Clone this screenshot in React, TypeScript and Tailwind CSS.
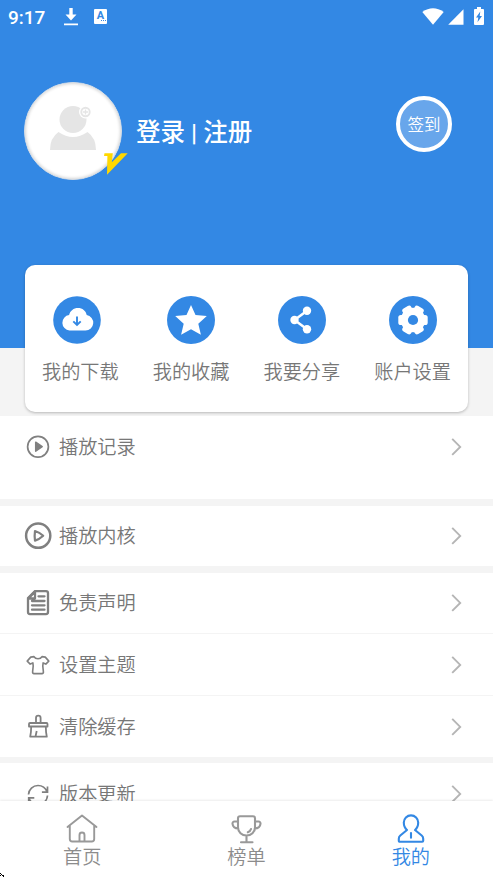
import React from "react";

type IconProps = { className?: string };

const DownloadCircle = ({ className }: IconProps) => (
  <svg viewBox="0 0 48 48" className={className}>
    <circle cx="24" cy="24" r="23.800" fill="#3388e4" />
    <path
      d="M16.5 34.5a7.8 7.8 0 0 1-.4-15.5C17.2 14.700 20.600 12 25 12s7.900 2.700 8.700 7a7.800 7.800 0 0 1-1.200 15.500z"
      fill="#fff"
    />
    <path d="M24 20.500v8M20.300 25.300l3.700 3.700 3.700-3.700" fill="none" stroke="#3388e4" strokeWidth="1.900" />
  </svg>
);

const StarCircle = ({ className }: IconProps) => (
  <svg viewBox="0 0 48 48" className={className}>
    <circle cx="24" cy="24" r="24" fill="#3388e4" />
    <path d="M24 9l4.500 10.100 11.300.9-8.500 7.700 2.600 11L24 33.200l-9.900 5.500 2.600-11L8.200 20l11.300-.9z" fill="#fff" />
  </svg>
);

const ShareCircle = ({ className }: IconProps) => (
  <svg viewBox="0 0 48 48" className={className}>
    <circle cx="24" cy="24" r="24" fill="#3388e4" />
    <path d="M29 14.700L16.500 24 29 33.300" fill="none" stroke="#fff" strokeWidth="2.500" />
    <circle cx="29" cy="14.700" r="4.200" fill="#fff" />
    <circle cx="16.500" cy="24" r="4.200" fill="#fff" />
    <circle cx="29" cy="33.300" r="4.200" fill="#fff" />
  </svg>
);

const GearCircle = ({ className }: IconProps) => (
  <svg viewBox="0 0 48 48" className={className}>
    <circle cx="24" cy="24" r="24" fill="#3388e4" />
    <g fill="#fff">
      <circle cx="24" cy="24" r="12.200" />
      <rect x="9.300" y="19" width="29.400" height="10" rx="2.600" />
      <rect x="9.300" y="19" width="29.400" height="10" rx="2.600" transform="rotate(60 24 24)" />
      <rect x="9.300" y="19" width="29.400" height="10" rx="2.600" transform="rotate(120 24 24)" />
    </g>
    <circle cx="24" cy="24" r="5.100" fill="#3388e4" />
  </svg>
);

const PlayRecord = ({ className }: IconProps) => (
  <svg viewBox="0 0 28 28" className={className} stroke="#808080" fill="none">
    <circle cx="14" cy="13.700" r="10.400" strokeWidth="1.700" />
    <path d="M11.700 9.200v9l6.500-4.500z" fill="#808080" strokeWidth="1.500" strokeLinejoin="round" />
  </svg>
);

const PlayCore = ({ className }: IconProps) => (
  <svg viewBox="0 0 28 28" className={className} stroke="#808080" fill="none" strokeLinejoin="round">
    <circle cx="14.200" cy="13.700" r="12.100" strokeWidth="2.500" />
    <path d="M11 9q4.500 1.300 8.200 4.800-3.700 3.500-8.200 4.800-.7-4.800 0-9.600z" strokeWidth="2.200" />
  </svg>
);

const DocumentIcon = ({ className }: IconProps) => (
  <svg viewBox="0 0 28 28" className={className} stroke="#808080" fill="none" strokeWidth="2.300" strokeLinejoin="round">
    <path d="M11 2.100h11a2 2 0 0 1 2 2v19a2 2 0 0 1-2 2H6a2 2 0 0 1-2-2V9z" />
    <path d="M11 2.500V9.500H4.500zM14.500 7.300h6M8 12H20.500M8 16.300H20.500M8 20.700H20.500" strokeWidth="2.300" strokeLinecap="round" />
  </svg>
);

const ShirtIcon = ({ className }: IconProps) => (
  <svg viewBox="0 0 28 28" className={className} stroke="#808080" fill="none" strokeWidth="1.600" strokeLinejoin="round">
    <path d="M10 5.600c1.500 2.800 6.500 2.800 8 0l3.300.5 3.500 4-3 3-2.700-1.200c-.8 3.500.3 6.500.3 9.600q-.2 1-1.300 1.100h-8.200q-1.100-.1-1.300-1.100c0-3.100 1.100-6.100.3-9.600L6.200 13.100l-3-3 3.500-4z" />
  </svg>
);

const BrushIcon = ({ className }: IconProps) => (
  <svg viewBox="0 0 28 28" className={className} stroke="#808080" fill="none" strokeWidth="1.800" strokeLinejoin="round">
    <path d="M12 10V5a2.300 2.300 0 0 1 4.600 0V10M6 10h16.500a1 1 0 0 1 1 1v2.500H5V11a1 1 0 0 1 1-1zM7.200 13.800q0 5-1 9.900h16.600q-1-4.900-1-9.900M12.700 18l-1.200 5.500" />
  </svg>
);

const RefreshIcon = ({ className }: IconProps) => (
  <svg viewBox="0 0 28 28" className={className} stroke="#808080" fill="none" strokeWidth="1.700">
    <path d="M4.500 14.500C4.700 9.300 9 5.500 14 5.500c4.200 0 7.500 2.400 9 6.300M23.500 6.500v5.700h-5.600M23.500 15.500c-.2 5.200-4.500 9-9.500 9-4.200 0-7.500-2.400-9-6.300M4.700 23.500v-5.700h5.600" />
  </svg>
);

const Chevron = () => (
  <svg viewBox="0 0 12 18" className="h-[18px] w-3" fill="none" stroke="#b5b5b5" strokeWidth="1.900">
    <path d="M2.200.9l8 8-8 8" />
  </svg>
);

const HomeIcon = ({ className }: IconProps) => (
  <svg viewBox="0 0 32 32" className={className} stroke="currentColor" fill="none" strokeWidth="1.900" strokeLinecap="round" strokeLinejoin="round">
    <path d="M1.500 14L16 2.400 30.500 14M3.800 12.500V26q0 2.500 2.500 2.500h19.400q2.500 0 2.500-2.500V12.500M13.500 28V22a2.500 2.500 0 0 1 5 0V28" />
  </svg>
);

const TrophyIcon = ({ className }: IconProps) => (
  <svg viewBox="0 0 32 32" className={className} stroke="currentColor" fill="none" strokeWidth="2.100" strokeLinecap="round" strokeLinejoin="round">
    <path d="M10 3.200h13q2 0 2 2v9.300a8.500 8 0 0 1-17 0V5.200q0-2 2-2zM8 8.500H4.500a2 2 0 0 0-2 2.200C2.800 14 5 15.500 8.300 15.500M25 8.500h3.500a2 2 0 0 1 2 2.200c-.3 3.300-2.500 4.800-5.800 4.800M16.500 23v6M11 29.200h11.500M17.800 19.300q2.500-.8 3.200-3.300" />
  </svg>
);

const UserIcon = ({ className }: IconProps) => (
  <svg viewBox="0 0 32 32" className={className} stroke="currentColor" fill="none" strokeWidth="2.100" strokeLinecap="round" strokeLinejoin="round">
    <path d="M12 17C9.500 15 8.800 12.300 8.800 9.600a7.200 7.200 0 0 1 14.400 0c0 2.700-.7 5.400-3.200 7.400l6.700 5.500q1.500 1.300 1.500 3.300v1.900q0 1-1 1H4.800q-1 0-1-1V25.800q0-2 1.500-3.300zM16 20v4.700" />
  </svg>
);

const shortcuts = [
  { label: "我的下载", Icon: DownloadCircle, shift: "mr-[6px]" },
  { label: "我的收藏", Icon: StarCircle, shift: "" },
  { label: "我要分享", Icon: ShareCircle, shift: "" },
  { label: "账户设置", Icon: GearCircle, shift: "" },
];

function MenuRow({ label, Icon, className = "" }: { label: string; Icon: React.FC<IconProps>; className?: string }) {
  return (
    <div className={`flex shrink-0 items-center bg-white pr-[31px] pl-6 ${className}`}>
      <Icon className="h-7 w-7" />
      <span className="ml-[7px] flex-1 pt-[2px] text-[19.2px] leading-7 font-[350] text-[#777]">{label}</span>
      <Chevron />
    </div>
  );
}

function StatusBar() {
  return (
    <div className="flex h-8 items-center pr-2 pl-2 text-white">
      <span className="mt-[3px] w-[38px] font-[Roboto] text-[19px] leading-none font-medium">9:17</span>
      <svg viewBox="0 0 14 18" className="mt-[2px] ml-[18px] h-[18px] w-3.5" fill="#fff">
        <path d="M5.300 0h3.400v6.500h3.800L7 12.500 1.500 6.500h3.800zM0 15.600h14v1.700H0z" />
      </svg>
      <div className="mt-[1px] ml-[16px] flex h-[15px] w-[13px] flex-col items-center rounded-[1px] bg-white font-[Roboto] text-[#3388e4]">
        <span className="h-[11px] text-[11px] leading-[13px] font-bold">A</span>
        <span className="flex gap-px self-end pr-px">
          <i className="h-px w-px bg-[#3388e4]" />
          <i className="h-px w-px bg-[#3388e4]" />
          <i className="h-px w-px bg-[#3388e4]" />
        </span>
      </div>
      <div className="flex-1" />
      <svg viewBox="0 0 22 17" className="h-[17px] w-[22px]" fill="#fff">
        <path d="M.3 4Q11-3.500 21.700 4L11 16.800z" />
      </svg>
      <svg viewBox="0 0 16 16" className="mt-[2px] ml-1 h-4 w-4" fill="#fff">
        <path d="M15.500.3v15.400H.2z" />
      </svg>
      <svg viewBox="0 0 10 18" className="mr-[1px] ml-[10px] h-[18px] w-[10px]">
        <path d="M3 0h4v2h2q1 0 1 1v14q0 1-1 1H1q-1 0-1-1V3q0-1 1-1h2z" fill="#fff" />
        <path d="M6.300 4.500L2 10.500h2.300L3.500 15.300 8 8.900H5.700z" fill="#3388e4" />
      </svg>
    </div>
  );
}

export default function App() {
  return (
    <div className="relative flex h-[878px] w-[493px] flex-col overflow-hidden bg-[#f4f4f4] font-['Roboto','Noto_Sans_CJK_SC',sans-serif]">
      <header className="h-[348px] shrink-0 bg-[#3388e4]">
        <StatusBar />
        <div className="flex pt-[50px] pl-6">
          <div className="relative h-[98px] w-[98px] rounded-full border border-[#d3dbe4] bg-white shadow-[inset_0_0_3px_1px_rgba(0,0,0,0.16)]">
            <svg viewBox="0 0 48 46" className="mt-[22px] ml-[24px] h-[46px] w-12">
              <circle cx="24" cy="14.500" r="13.500" fill="#e5e5e5" />
              <path d="M9.500 27Q24 37 38.500 27 47 33 47 45H1Q1 33 9.500 27z" fill="#e5e5e5" />
              <circle cx="36.500" cy="7" r="6.500" fill="#fff" />
              <circle cx="36.500" cy="7" r="4.200" fill="none" stroke="#e5e5e5" strokeWidth="1.900" />
              <path d="M36.500 4.500v5M34 7h5" stroke="#e5e5e5" strokeWidth="1.300" />
            </svg>
            <svg viewBox="0 0 24 22" className="absolute top-[70px] left-[79px] h-[22px] w-6">
              <path d="M.5.300h8.300L7.800 9.200 17 .3h6.700L3 21.700 3.400 3H0z" fill="#ffd800" />
            </svg>
          </div>
          <span className="mt-[33px] ml-[14px] text-[24.500px] leading-9 font-medium whitespace-pre text-white">登录 | 注册</span>
          <button className="mt-[14px] mr-[41px] ml-auto flex h-14 w-14 items-center justify-center rounded-full border-4 border-white bg-[#68a6eb] pt-[4px] text-[16.500px] font-[350] text-white">
            签到
          </button>
        </div>
      </header>

      <section className="relative z-10 mx-[25px] -mt-[83px] grid h-[147px] shrink-0 grid-cols-4 rounded-[10px] bg-white shadow-[0_1px_3px_rgba(0,0,0,0.25)]">
        {shortcuts.map(({ label, Icon, shift }) => (
          <div key={label} className="flex flex-col items-center pt-[31px]">
            <Icon className={`h-12 w-12 ${shift}`} />
            <span className="mt-[15px] text-[19.2px] leading-7 font-[350] text-[#777]">{label}</span>
          </div>
        ))}
      </section>

      <main className="mt-1 flex min-h-0 flex-1 flex-col overflow-hidden">
        <MenuRow label="播放记录" Icon={PlayRecord} className="h-[83px] pb-[22px]" />
        <MenuRow label="播放内核" Icon={PlayCore} className="mt-[7px] h-[60px]" />
        <MenuRow label="免责声明" Icon={DocumentIcon} className="mt-[7px] h-[60px]" />
        <MenuRow label="设置主题" Icon={ShirtIcon} className="mt-[1px] h-[61px]" />
        <MenuRow label="清除缓存" Icon={BrushIcon} className="mt-[1px] h-[61px]" />
        <MenuRow label="版本更新" Icon={RefreshIcon} className="mt-[6px] h-[61px]" />
      </main>

      <nav className="z-10 grid h-[77px] shrink-0 grid-cols-3 bg-white text-[#999] shadow-[0_-1px_2px_rgba(0,0,0,0.08)]">
        <div className="flex flex-col items-center pt-3">
          <HomeIcon className="h-8 w-8" />
          <span className="-mt-px text-[19.2px] leading-7 font-[350] text-[#8c8c8c]">首页</span>
        </div>
        <div className="flex flex-col items-center pt-3">
          <TrophyIcon className="h-8 w-8" />
          <span className="-mt-px text-[19.2px] leading-7 font-[350] text-[#8c8c8c]">榜单</span>
        </div>
        <div className="flex flex-col items-center pt-3 text-[#3388e4]">
          <UserIcon className="h-8 w-8" />
          <span className="-mt-px text-[19.2px] leading-7 font-[350]">我的</span>
        </div>
      </nav>
      <svg viewBox="0 0 5 5" className="absolute bottom-0 left-0 z-20 h-[5px] w-[5px]">
        <path d="M0 0h1v1H0zM1 1h1v1H1zM0 2h1v1H0zM2 2h2v1H2zM3 3h1v1H3z" fill="#000" />
      </svg>
    </div>
  );
}
